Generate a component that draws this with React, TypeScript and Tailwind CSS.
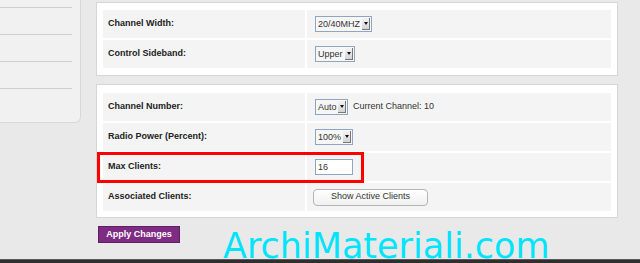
import type { ReactNode } from 'react';

// Fake native select, drawn so it looks like the old router UI widget
function Select({ value, width }: { value: string; width: number }) {
  return (
    <div
      className="flex h-[16px] items-stretch border border-[#8fa6c2] bg-[#f7f7f7]"
      style={{ width }}
    >
      <span className="flex-1 pl-[2px] text-[9px] leading-[14px] text-[#333]">{value}</span>
      <span className="my-[1px] mr-[1px] flex w-[8px] items-center justify-center border-r border-b border-[#777] bg-gradient-to-b from-[#f4f4f4] to-[#d4d4d4]">
        <span className="h-0 w-0 border-x-[2.5px] border-t-[3px] border-x-transparent border-t-[#111]" />
      </span>
    </div>
  );
}

function Row({ label, children }: { label: string; children: ReactNode }) {
  return (
    <div className="grid h-[28px] grid-cols-[202px_1fr] gap-[2px]">
      <div className="flex items-center bg-[#f4f4f4] pl-[5px] text-[9px] font-bold text-[#222]">{label}</div>
      <div className="flex items-center gap-[5px] bg-[#f4f4f4] pl-[8px] text-[9px] text-[#333]">{children}</div>
    </div>
  );
}

const SIDE_LINES = [7, 34, 61, 88];

export default function App() {
  return (
    <div className="relative flex h-[263px] w-[640px] flex-col overflow-hidden bg-[#e9e9e9] font-['Liberation_Sans',Arial,sans-serif]">
      <div className="flex flex-1 items-start">
        {/* Sidebar menu stub */}
        <div className="flex h-[123px] w-[81px] flex-col rounded-br-[6px] border-r border-b border-[#d8d8d8] bg-[#f1f1f1]">
          {SIDE_LINES.map((y, i) => (
            <div key={y} className={`${i === 0 ? 'mt-[7px]' : 'mt-[26px]'} h-px w-[72px] bg-[#cfcfcf]`} />
          ))}
        </div>

        <div className="ml-[15px] flex flex-col pt-[2px]">
          {/* Panel 1 */}
          <div className="flex w-[522px] flex-col gap-[2px] border border-[#d6d6d6] bg-white px-[6px] py-[7px]">
            <Row label="Channel Width:">
              <Select value="20/40MHZ" width={57} />
            </Row>
            <Row label="Control Sideband:">
              <Select value="Upper" width={40} />
            </Row>
          </div>

          {/* Panel 2 */}
          <div className="mt-[8px] flex w-[522px] flex-col gap-[2px] border border-[#d6d6d6] bg-white px-[6px] pt-[8px] pb-[6px]">
            <Row label="Channel Number:">
              <Select value="Auto" width={33} />
              <span>Current Channel: 10</span>
            </Row>
            <Row label="Radio Power (Percent):">
              <Select value="100%" width={38} />
            </Row>
            <Row label="Max Clients:">
              <input
                readOnly
                value="16"
                className="h-[16px] w-[38px] border border-[#8fa6c2] bg-white pl-[2px] text-[9px] text-[#333] outline-none"
              />
            </Row>
            <Row label="Associated Clients:">
              <button
                type="button"
                className="-ml-[2px] h-[17px] w-[115px] rounded-[4px] border border-[#b5b5b5] bg-gradient-to-b from-white to-[#f0f0f0] text-[9px] text-[#333]"
              >
                Show Active Clients
              </button>
            </Row>
          </div>

          <button
            type="button"
            className="mt-[8px] ml-[2px] h-[17px] w-[82px] border border-[#5e1f63] bg-[#7e2c83] text-[9px] font-bold text-white"
          >
            Apply Changes
          </button>
        </div>
      </div>

      <div className="h-[4px] border-t border-[#5a5a5a] bg-[#2f2f2f]" />

      {/* Highlight box */}
      <div className="absolute top-[152px] left-[97px] h-[31px] w-[267px] border-[3px] border-[#f00]" />

      {/* Watermark */}
      <div className="absolute top-[233px] left-[223px] font-['DejaVu_Sans',sans-serif] text-[35px] leading-[26px] text-[#00e4fc]">
        ArchiMateriali.com
      </div>
    </div>
  );
}
